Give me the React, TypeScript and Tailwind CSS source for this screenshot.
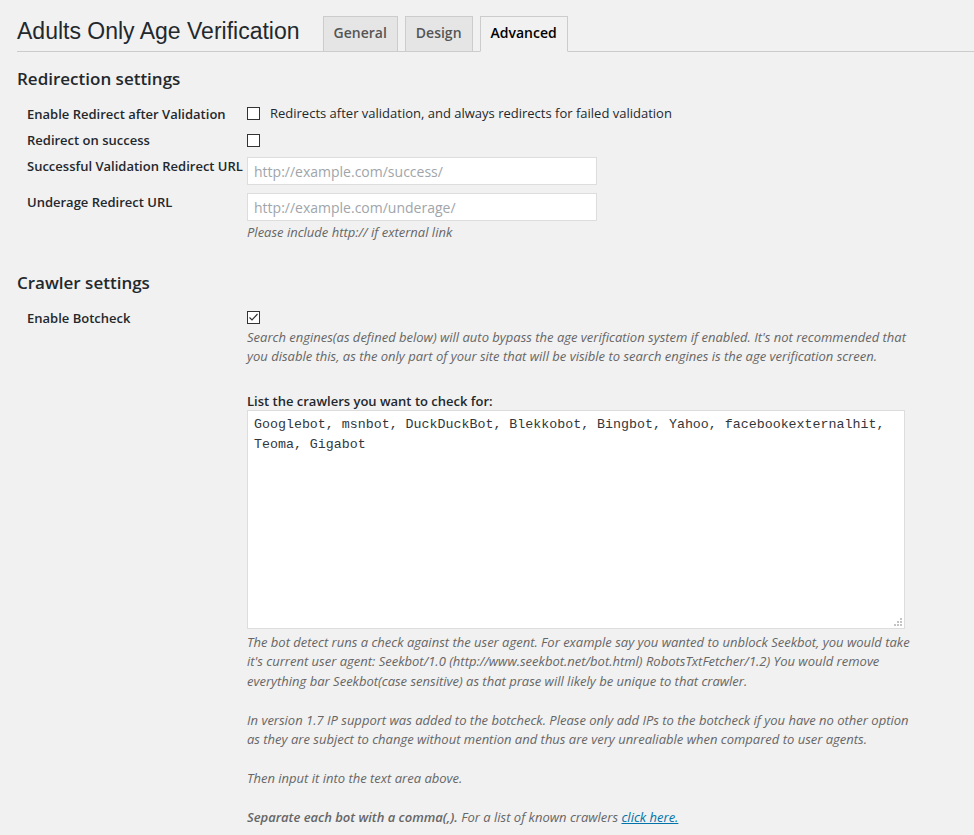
import React from 'react';

const crawlers =
  'Googlebot, msnbot, DuckDuckBot, Blekkobot, Bingbot, Yahoo, facebookexternalhit, Teoma, Gigabot';

function Checkbox({ checked = false }: { checked?: boolean }) {
  return (
    <span className="inline-flex h-[13px] w-[13px] shrink-0 items-center justify-center border border-[#333] bg-white">
      {checked && (
        <svg width="11" height="11" viewBox="0 0 11 11">
          <polyline points="1.5,5.5 4,8 9.5,2" fill="none" stroke="#333" strokeWidth="1.2" />
        </svg>
      )}
    </span>
  );
}

function Label({ children }: { children: React.ReactNode }) {
  return (
    <div className="w-[230px] shrink-0 pl-[10px] text-[13px] font-semibold leading-[18px] text-[#23282d]">
      {children}
    </div>
  );
}

function TextInput({ placeholder }: { placeholder: string }) {
  return (
    <input
      type="text"
      placeholder={placeholder}
      className="h-[28px] w-[350px] border border-[#ddd] bg-white px-[6px] text-[14px] text-[#32373c] outline-none placeholder:text-[#a0a5aa]"
    />
  );
}

export default function App() {
  return (
    <div className="min-h-screen bg-[#f1f1f1] font-['Open_Sans',sans-serif] text-[#23282d]">
      {/* Header with tabs */}
      <div className="ml-[17px] flex items-end border-b border-[#ccc] pt-[16px]">
        <h1 className="pb-[5px] font-['Liberation_Sans',Arial,sans-serif] text-[23px] leading-[29px] font-normal text-[#23282d]">
          Adults Only Age Verification
        </h1>
        <div className="ml-[23px] flex gap-[7px]">
          <span className="-mb-px border border-[#ccc] bg-[#e5e5e5] px-[10px] pt-[4px] pb-[6px] text-[14px] leading-[24px] font-semibold text-[#555]">
            General
          </span>
          <span className="-mb-px border border-[#ccc] bg-[#e5e5e5] px-[10px] pt-[4px] pb-[6px] text-[14px] leading-[24px] font-semibold text-[#555]">
            Design
          </span>
          <span className="-mb-px border border-[#ccc] border-b-[#f1f1f1] bg-[#f1f1f1] px-[10px] pt-[4px] pb-[6px] text-[14px] leading-[24px] font-semibold text-black">
            Advanced
          </span>
        </div>
      </div>

      <div className="ml-[17px]">
        {/* Redirection settings */}
        <h2 className="mt-[15px] text-[17px] leading-[24px] font-semibold">Redirection settings</h2>

        <div className="mt-[9px] flex h-[27px] items-center">
          <Label>Enable Redirect after Validation</Label>
          <div className="flex items-center gap-[10px]">
            <Checkbox />
            <span className="text-[13px] text-[#23282d]">
              Redirects after validation, and always redirects for failed validation
            </span>
          </div>
        </div>

        <div className="flex h-[26px] items-center">
          <Label>Redirect on success</Label>
          <Checkbox />
        </div>

        <div className="mt-[4px] flex items-start">
          <Label>Successful Validation Redirect URL</Label>
          <TextInput placeholder="http://example.com/success/" />
        </div>

        <div className="mt-[8px] flex items-start">
          <Label>Underage Redirect URL</Label>
          <div>
            <TextInput placeholder="http://example.com/underage/" />
            <p className="mt-[2px] text-[13px] leading-[19.5px] text-[#666] italic">
              Please include http:// if external link
            </p>
          </div>
        </div>

        {/* Crawler settings */}
        <h2 className="mt-[28px] text-[17px] leading-[24px] font-semibold">Crawler settings</h2>

        <div className="mt-[14px] flex items-start">
          <Label>Enable Botcheck</Label>
          <div className="w-[700px]">
            <div className="flex h-[18px] items-center">
              <Checkbox checked />
            </div>
            <p className="mt-[1px] text-[13px] leading-[19px] whitespace-nowrap text-[#666] italic">
              Search engines(as defined below) will auto bypass the age verification system if enabled. It's not recommended that
              <br />
              you disable this, as the only part of your site that will be visible to search engines is the age verification screen.
            </p>

            <p className="mt-[26px] text-[13px] leading-[18px] font-semibold text-[#23282d]">
              List the crawlers you want to check for:
            </p>
            <div className="relative w-[658px]">
              <textarea
                defaultValue={crawlers}
                className="block h-[219px] w-full resize-none border border-[#ddd] bg-white px-[6px] pt-[4px] font-['Liberation_Mono',monospace] text-[13.3px] leading-[20px] text-[#32373c] outline-none"
              />
              {/* resize grip */}
              <div className="pointer-events-none absolute right-[3px] bottom-[3px] grid grid-cols-3 gap-[1px]">
                <span className="h-[2px] w-[2px]" />
                <span className="h-[2px] w-[2px]" />
                <span className="h-[2px] w-[2px] bg-[#c4c4c4]" />
                <span className="h-[2px] w-[2px]" />
                <span className="h-[2px] w-[2px] bg-[#c4c4c4]" />
                <span className="h-[2px] w-[2px] bg-[#c4c4c4]" />
                <span className="h-[2px] w-[2px] bg-[#c4c4c4]" />
                <span className="h-[2px] w-[2px] bg-[#c4c4c4]" />
                <span className="h-[2px] w-[2px] bg-[#c4c4c4]" />
              </div>
            </div>

            <p className="mt-[4px] text-[13px] leading-[19.5px] whitespace-nowrap text-[#666] italic">
              The bot detect runs a check against the user agent. For example say you wanted to unblock Seekbot, you would take
              <br />
              it's current user agent: Seekbot/1.0 (http://www.seekbot.net/bot.html) RobotsTxtFetcher/1.2) You would remove
              <br />
              everything bar Seekbot(case sensitive) as that prase will likely be unique to that crawler.
              <br />
              <br />
              In version 1.7 IP support was added to the botcheck. Please only add IPs to the botcheck if you have no other option
              <br />
              as they are subject to change without mention and thus are very unrealiable when compared to user agents.
              <br />
              <br />
              Then input it into the text area above.
              <br />
              <br />
              <strong className="font-semibold">Separate each bot with a comma(,).</strong> For a list of known crawlers{' '}
              <a href="#" className="text-[#0073aa] underline">
                click here.
              </a>
            </p>
          </div>
        </div>
      </div>
    </div>
  );
}
